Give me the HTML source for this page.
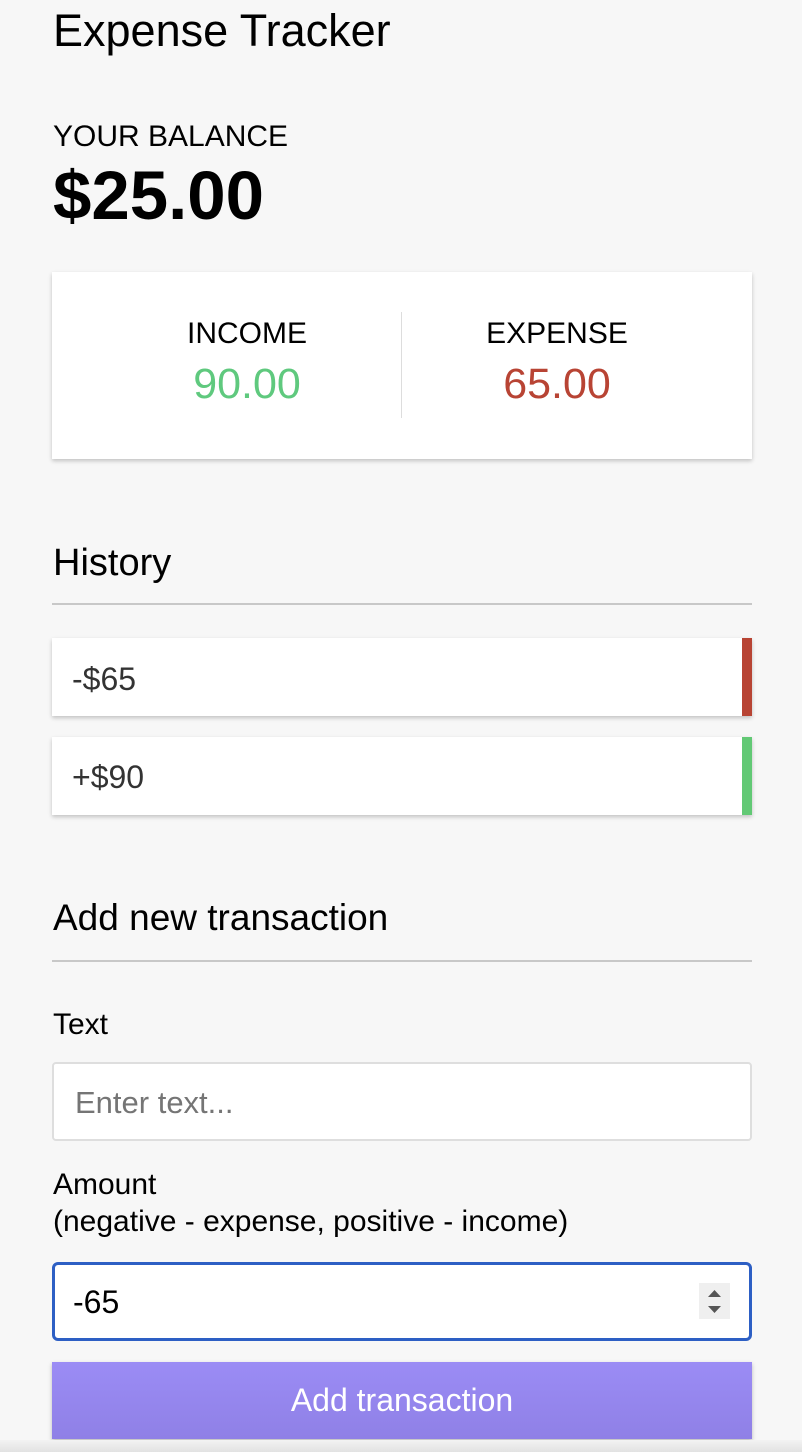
<!DOCTYPE html>
<html><head><meta charset="utf-8"><style>
*{margin:0;padding:0;box-sizing:border-box}
html,body{width:802px;height:1452px;background:#f7f7f7;overflow:hidden;font-family:"Liberation Sans",sans-serif;color:#000}
.a{position:absolute;white-space:nowrap}
.card{position:absolute;background:#fff;box-shadow:0 2px 4px rgba(0,0,0,0.22)}
.line{position:absolute;left:52px;width:700px;height:2px;background:#c8c8c8}
</style></head><body>
<div class="a" style="left:53px;top:8px;font-size:45px;line-height:46px">Expense Tracker</div>
<div class="a" style="left:53px;top:121px;font-size:30px;line-height:32px">YOUR BALANCE</div>
<div class="a" style="left:53px;top:161px;font-size:69px;line-height:69px;font-weight:bold">$25.00</div>

<div class="card" style="left:52px;top:272px;width:700px;height:187px"></div>
<div style="position:absolute;left:401px;top:312px;width:1px;height:106px;background:#ddd"></div>
<div class="a" style="left:92px;width:310px;text-align:center;top:318px;font-size:30px;line-height:32px">INCOME</div>
<div class="a" style="left:92px;width:310px;text-align:center;top:363px;font-size:43px;line-height:43px;color:#5fc97e">90.00</div>
<div class="a" style="left:402px;width:310px;text-align:center;top:318px;font-size:30px;line-height:32px">EXPENSE</div>
<div class="a" style="left:402px;width:310px;text-align:center;top:363px;font-size:43px;line-height:43px;color:#b84434">65.00</div>

<div class="a" style="left:53px;top:544px;font-size:38px;line-height:38px">History</div>
<div class="line" style="top:603px"></div>

<div class="card" style="left:52px;top:638px;width:700px;height:78px;border-right:10px solid #b84434"></div>
<div class="a" style="left:72px;top:663px;font-size:32px;line-height:32px;color:#333">-$65</div>
<div class="card" style="left:52px;top:737px;width:700px;height:78px;border-right:10px solid #62c975"></div>
<div class="a" style="left:72px;top:761px;font-size:32px;line-height:32px;color:#333">+$90</div>

<div class="a" style="left:53px;top:899px;font-size:37px;line-height:38px">Add new transaction</div>
<div class="line" style="top:960px"></div>

<div class="a" style="left:53px;top:1009px;font-size:30px;line-height:32px">Text</div>
<div style="position:absolute;left:52px;top:1062px;width:700px;height:79px;background:#fff;border:2px solid #dedede;border-radius:4px"></div>
<div class="a" style="left:75px;top:1087px;font-size:31px;line-height:31px;color:#757575">Enter text...</div>

<div class="a" style="left:53px;top:1169px;font-size:30px;line-height:32px">Amount</div>
<div class="a" style="left:53px;top:1206px;font-size:30px;line-height:32px">(negative - expense, positive - income)</div>
<div style="position:absolute;left:52px;top:1262px;width:700px;height:79px;background:#fff;border:3px solid #2d5fc4;border-radius:6px"></div>
<div class="a" style="left:73px;top:1286px;font-size:32px;line-height:32px">-65</div>
<div style="position:absolute;left:699px;top:1283px;width:31px;height:36px;background:#efefef"></div>
<svg style="position:absolute;left:699px;top:1283px" width="31" height="36"><path d="M9 14 L15.5 7 L22 14Z M9 23 L15.5 30 L22 23Z" fill="#555"/></svg>

<div style="position:absolute;left:52px;top:1362px;width:700px;height:77px;background:linear-gradient(#9b8cf5,#8f80e6);box-shadow:0 2px 4px rgba(0,0,0,0.25)"></div>
<div class="a" style="left:52px;width:700px;text-align:center;top:1384px;font-size:32px;line-height:32px;color:#fff">Add transaction</div>
<div style="position:absolute;left:0;top:1440px;width:802px;height:12px;background:linear-gradient(#f3f3f3,#e2e2e2)"></div>
</body></html>
